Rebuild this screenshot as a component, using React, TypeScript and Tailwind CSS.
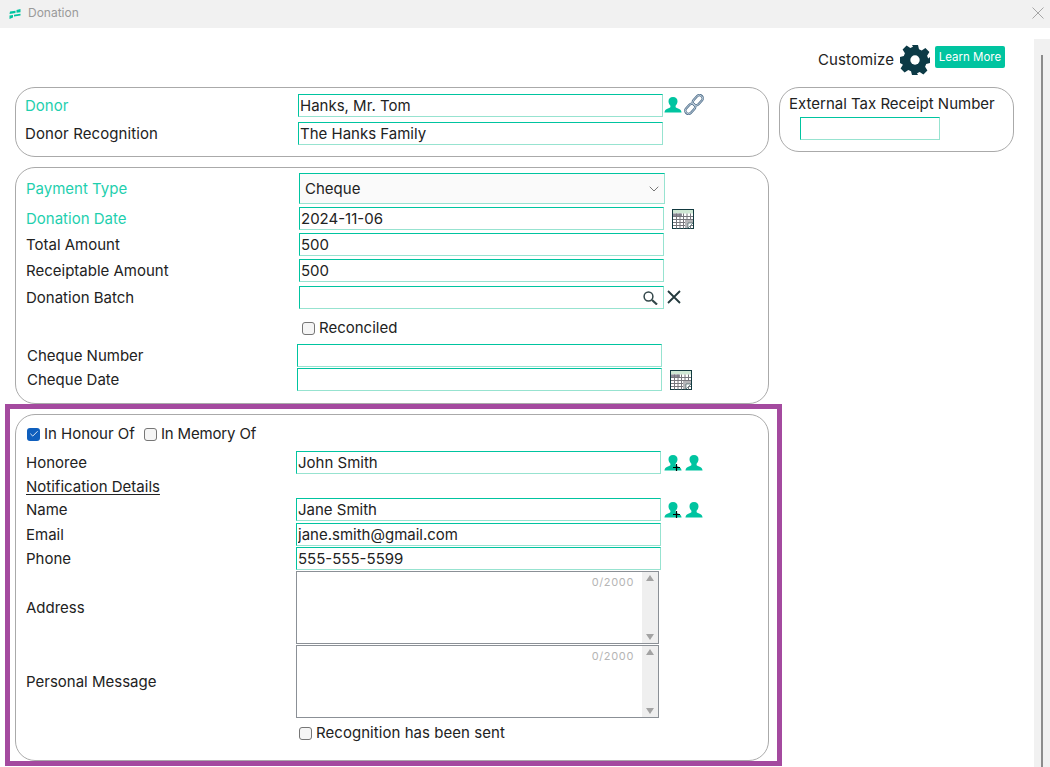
import { Check, ChevronDown } from 'lucide-react';

const inputBorder =
  'border border-t-[#00c4a0] border-l-[#00c4a0] border-r-[#97e3d0] border-b-[#97e3d0]';
const label = 'pt-px leading-[20px]';

const PersonIcon = ({ plus }: { plus?: boolean }) => (
  <span className="relative block h-[16px] w-[18px]">
    <svg viewBox="0 0 18 16" className="h-[16px] w-[18px]">
      <path
        d="M9 0c2.900 0 4.500 1.900 4.500 4.300 0 1.900-.8 3.500-1.900 4.400v1c0 .7.500 1 1.300 1.300l2.300.9c1.100.4 1.900 1.300 2.300 3.100v.5H.5v-.5c.4-1.800 1.200-2.700 2.300-3.100l2.300-.9c.8-.3 1.300-.6 1.300-1.300v-1C5.300 7.800 4.500 6.200 4.500 4.300 4.500 1.900 6.100 0 9 0z"
        fill="#00c4a0"
      />
    </svg>
    {plus && (
      <svg viewBox="0 0 9 9" className="absolute top-[8px] left-[8px] h-[9px] w-[9px]">
        <path d="M4.500 1v7M1 4.500h7" stroke="#000" strokeWidth="1.200" />
      </svg>
    )}
  </span>
);

const ChainIcon = () => (
  <svg viewBox="0 0 20 21" className="h-[21px] w-[20px]">
    <g fill="none">
      <rect x="10.500" y="0.500" width="6.500" height="11.500" rx="3.200" transform="rotate(42 13.750 6.250)" stroke="#4f6f8c" strokeWidth="2.400" />
      <rect x="3" y="9" width="6.500" height="11.500" rx="3.200" transform="rotate(42 6.250 14.750)" stroke="#4f6f8c" strokeWidth="2.400" />
      <rect x="10.500" y="0.500" width="6.500" height="11.500" rx="3.200" transform="rotate(42 13.750 6.250)" stroke="#d5dee6" strokeWidth="0.800" />
      <rect x="3" y="9" width="6.500" height="11.500" rx="3.200" transform="rotate(42 6.250 14.750)" stroke="#d5dee6" strokeWidth="0.800" />
    </g>
  </svg>
);

const CalendarIcon = () => (
  <svg viewBox="0 0 22 20" className="h-[20px] w-[22px]">
    <rect x="0.500" y="0.500" width="21" height="19" fill="#fff" stroke="#12393f" />
    <rect x="1" y="1" width="20" height="3.500" fill="#cfe8d4" />
    <rect x="1" y="4.500" width="9" height="3" fill="#8d8a97" />
    <path
      d="M1 7.500h20M1 10.500h20M1 13.500h20M1 16.500h20M4.500 4.500v15M8 4.500v15M11.500 4.500v15M15 4.500v15M18.500 4.500v15"
      stroke="#77777d"
      strokeWidth="1"
    />
    <path d="M13 11h8v3l-5 5h-3z" fill="#b5b5b8" />
    <path d="M16 19l5-5h-5z" fill="#fff" stroke="#12393f" strokeWidth="0.500" />
  </svg>
);

const GearIcon = () => (
  <svg viewBox="0 0 30 30" className="h-[30px] w-[30px]">
    <path
      d="M12 0h6l1 4.300 2.700 1.100 3.700-2.300 4 4-2.300 3.700 1.100 2.700L30 12v6l-3.800 1-1.100 2.700 2.300 3.700-4 4-3.700-2.300-2.700 1.100L18 30h-6l-1-3.800-2.700-1.100-3.700 2.300-4-4 2.300-3.700L1.800 19 0 18v-6l3.800-1 1.100-2.700-2.300-3.700 4-4 3.700 2.300L13 1.800z"
      fill="#0c3a46"
    />
    <circle cx="15" cy="15" r="4.700" fill="#fff" />
  </svg>
);

const Logo = () => (
  <svg viewBox="0 0 12 10" className="h-[10px] w-[12px]">
    <path d="M1 2.500l5.500-.8v2.400L.5 5zM7.500 1l4-1v3.200l-4 .6zM.5 6.500l3.500-.5v2.600L.5 10zM5 5.800l6.500-1.100v1.800L5 7.500z" fill="#00c4a0" />
  </svg>
);

const CloseIcon = () => (
  <svg viewBox="0 0 12 12" className="h-[12px] w-[12px]">
    <path d="M.5.500l11 11M11.500.500l-11 11" stroke="#a6a6a6" strokeWidth="1" />
  </svg>
);

const LensIcon = () => (
  <svg viewBox="0 0 15 14" className="h-[14px] w-[15px]">
    <circle cx="5.500" cy="5.500" r="4.400" fill="none" stroke="#33474a" strokeWidth="1.500" />
    <path d="M9 9l5 4.500" stroke="#33474a" strokeWidth="2.200" />
  </svg>
);

const ClearIcon = () => (
  <svg viewBox="0 0 14 14" className="h-[14px] w-[14px]">
    <path d="M1 1l12 12M13 1L1 13" stroke="#23393d" strokeWidth="1.800" />
  </svg>
);

const Box = ({ checked }: { checked?: boolean }) =>
  checked ? (
    <span className="flex h-[13px] w-[13px] items-center justify-center rounded-[3px] bg-[#0f5fbd]">
      <Check size={10} color="#fff" strokeWidth={2} />
    </span>
  ) : (
    <span className="block h-[13px] w-[13px] rounded-[3px] border border-[#767676] bg-[#f5f5f5]" />
  );

const Field = ({ value, className }: { value?: string; className: string }) => (
  <input
    readOnly
    value={value ?? ''}
    className={`${inputBorder} h-[23px] bg-white pl-px text-[15px] text-[#222] outline-none ${className}`}
  />
);

const Notes = () => (
  <div className="flex h-[73px] w-[363px] border border-[#8b9096]">
    <div className="flex-1 pt-[3px] pr-[8px] text-right text-[11px] leading-[14px] tracking-[0.65px] text-[#b5b5b5]">0/2000</div>
    <div className="flex w-[16px] flex-col items-center justify-between bg-[#efefef] py-[3px]">
      <span className="h-0 w-0 border-x-[4px] border-b-[6px] border-x-transparent border-b-[#a3a3a3]" />
      <span className="h-0 w-0 border-x-[4px] border-t-[6px] border-x-transparent border-t-[#a3a3a3]" />
    </div>
  </div>
);

export default function App() {
  return (
    <div className="flex h-[767px] w-[1050px] flex-col overflow-hidden bg-white font-['Inter',sans-serif] text-[15px] text-[#222]">
      <div className="flex h-[28px] shrink-0 items-center bg-[#f1f1f1] pr-[6px] pl-[9px]">
        <Logo />
        <span className="mb-[2px] ml-[7px] flex-1 text-[12px] text-[#9a9a9a]">Donation</span>
        <span className="mb-[3px]"><CloseIcon /></span>
      </div>

      <div className="flex flex-1">
        <div className="w-[1034px]">
          <div className="flex h-[59px] items-start justify-end pt-[17px] pr-[29px]">
            <span className="mt-[4px] mr-[6px] tracking-[0.1px]">Customize</span>
            <GearIcon />
            <span className="mt-[1px] ml-[5px] flex h-[22px] w-[70px] items-center justify-center rounded-[2px] bg-[#00c4a0] pt-px text-[11.5px] text-white">
              Learn More
            </span>
          </div>

          <div className="flex items-start">
            <div className="ml-[15px] w-[754px]">
              <div className="h-[70px] rounded-[20px] border border-[#aaa] pt-[6px] pl-[9px]">
                <div className="flex items-center">
                  <span className={`${label} w-[273px] text-[#1fcfae]`}>Donor</span>
                  <Field value="Hanks, Mr. Tom" className="w-[365px]" />
                  <span className="mb-[2px] ml-px"><PersonIcon /></span>
                  <span className="mb-[2px] ml-[2px]"><ChainIcon /></span>
                </div>
                <div className="mt-[5px] flex items-center">
                  <span className={`${label} w-[273px] tracking-[0.1px]`}>Donor Recognition</span>
                  <Field value="The Hanks Family" className="w-[365px]" />
                </div>
              </div>

              <div className="mt-[10px] h-[237px] rounded-[20px] border border-[#aaa] pt-[5px] pl-[10px]">
                <div className="flex items-center">
                  <span className={`${label} w-[273px] text-[#1fcfae]`}>Payment Type</span>
                  <div className={`${inputBorder} flex h-[31px] w-[366px] items-center justify-between bg-[#fafafa] pr-[2px] pl-[5px]`}>
                    <span className="pt-px">Cheque</span>
                    <ChevronDown size={16} color="#555" strokeWidth={1.200} />
                  </div>
                </div>
                <div className="mt-[3px] flex items-center">
                  <span className={`${label} w-[273px] text-[#1fcfae]`}>Donation Date</span>
                  <Field value="2024-11-06" className="w-[365px]" />
                  <span className="ml-[8px]"><CalendarIcon /></span>
                </div>
                <div className="mt-[3px] flex items-center">
                  <span className={`${label} w-[273px]`}>Total Amount</span>
                  <Field value="500" className="w-[365px]" />
                </div>
                <div className="mt-[3px] flex items-center">
                  <span className={`${label} w-[273px]`}>Receiptable Amount</span>
                  <Field value="500" className="w-[365px]" />
                </div>
                <div className="mt-[4px] flex items-center">
                  <span className={`${label} w-[273px]`}>Donation Batch</span>
                  <div className={`${inputBorder} flex h-[23px] w-[365px] items-center justify-end bg-white pr-[5px]`}>
                    <LensIcon />
                  </div>
                  <span className="mb-[2px] ml-[3px]"><ClearIcon /></span>
                </div>
                <div className="mt-[10px] ml-[276px] flex h-[18px] items-center gap-[4px]">
                  <Box />
                  <span>Reconciled</span>
                </div>
                <div className="mt-[7px] flex items-center">
                  <span className={`${label} ml-px w-[270px]`}>Cheque Number</span>
                  <Field className="w-[365px]" />
                </div>
                <div className="mt-px flex items-center">
                  <span className={`${label} ml-px w-[270px]`}>Cheque Date</span>
                  <Field className="w-[365px]" />
                  <span className="ml-[8px]"><CalendarIcon /></span>
                </div>
              </div>

              {/* purple highlight around the honour section */}
              <div className="-ml-[10px] h-[362px] w-[777px] border-[5px] border-[#a44a9f] bg-white pt-[5px] pr-[8px] pl-[5px]">
                <div className="h-[347px] rounded-[20px] border border-[#aaa] pt-[9px] pl-[10px]">
                  <div className="flex h-[20px] items-center">
                    <span className="ml-px"><Box checked /></span>
                    <span className="ml-[4px]">In Honour Of</span>
                    <span className="ml-[9px]"><Box /></span>
                    <span className="ml-[4px] tracking-[-0.15px]">In Memory Of</span>
                  </div>
                  <div className="mt-[7px] flex items-center">
                    <span className={`${label} w-[270px]`}>Honoree</span>
                    <Field value="John Smith" className="w-[365px]" />
                    <span className="ml-[3px]"><PersonIcon plus /></span>
                    <span className="ml-[3px]"><PersonIcon /></span>
                  </div>
                  <div className="mt-[3px] h-[20px] pt-px leading-[18px] underline underline-offset-2">Notification Details</div>
                  <div className="mt-px flex items-center">
                    <span className={`${label} w-[270px]`}>Name</span>
                    <Field value="Jane Smith" className="w-[365px]" />
                    <span className="ml-[3px]"><PersonIcon plus /></span>
                    <span className="ml-[3px]"><PersonIcon /></span>
                  </div>
                  <div className="mt-[2px] flex items-center">
                    <span className={`${label} w-[270px]`}>Email</span>
                    <Field value="jane.smith@gmail.com" className="w-[365px]" />
                  </div>
                  <div className="mt-px flex items-center">
                    <span className={`${label} w-[270px]`}>Phone</span>
                    <Field value="555-555-5599" className="w-[365px]" />
                  </div>
                  <div className="mt-px flex items-center">
                    <span className="w-[270px] pt-[2px]">Address</span>
                    <Notes />
                  </div>
                  <div className="mt-px flex items-center">
                    <span className="w-[270px] pt-[2px]">Personal Message</span>
                    <Notes />
                  </div>
                  <div className="mt-[6px] ml-[273px] flex h-[18px] items-center gap-[4px]">
                    <Box />
                    <span className="tracking-[0.05px]">Recognition has been sent</span>
                  </div>
                </div>
              </div>
            </div>

            <div className="ml-[10px] h-[65px] w-[235px] rounded-[20px] border border-[#aaa] pt-[6px] pl-[9px]">
              <div className="leading-[20px]">External Tax Receipt Number</div>
              <Field className="mt-[3px] ml-[11px] w-[140px]" />
            </div>
          </div>
        </div>

        <div className="mt-[11px] flex w-[16px] justify-center bg-[#f1f1f1] pt-[16px]">
          <div className="h-full w-[2px] bg-[#8c8c8c]" />
        </div>
      </div>
    </div>
  );
}
